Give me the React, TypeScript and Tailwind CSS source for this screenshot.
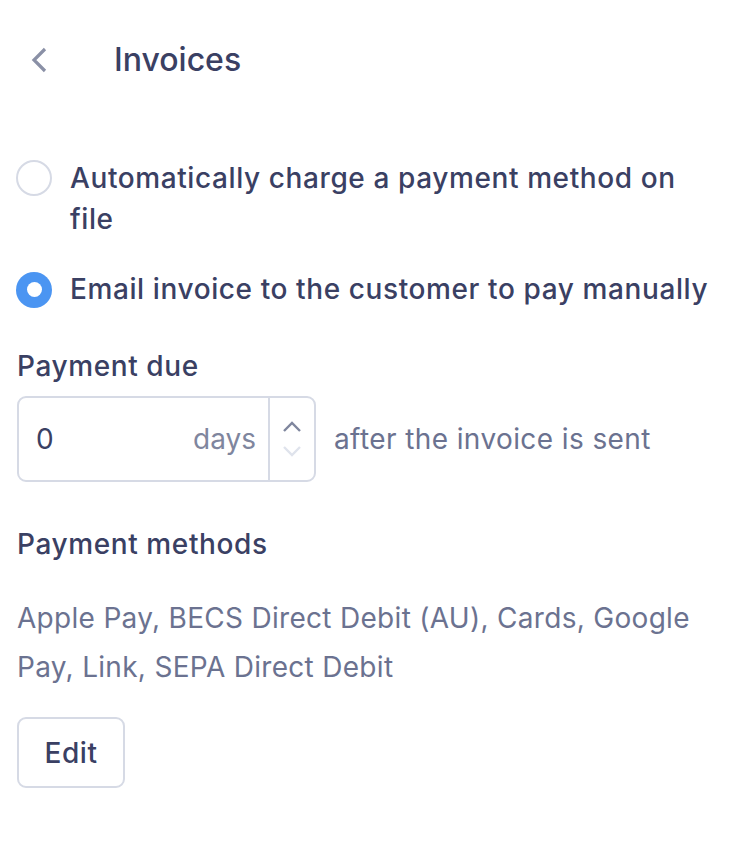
import React from "react";

export default function App() {
  const font = { fontFamily: "Inter, 'Noto Sans', sans-serif" };
  return (
    <div className="w-[740px] h-[842px] bg-white text-[#3c4264]" style={font}>
      <div className="flex items-center h-[60px] mt-[30px] pl-[28px]">
        <svg width="22" height="30" viewBox="0 0 22 30" className="shrink-0">
          <path d="M17 4 L6 15 L17 26" fill="none" stroke="#8a90a6" strokeWidth="3.2" strokeLinecap="butt" strokeLinejoin="miter" />
        </svg>
        <div className="ml-[64px] text-[32px] font-medium leading-[40px] text-[#3a4063]">Invoices</div>
      </div>

      <div className="px-[16px] mt-[68px]">
        <div className="flex items-start gap-[18px]">
          <div className="mt-[2px] w-[36px] h-[36px] shrink-0 rounded-full border-[2px] border-[#d6dae5] bg-white" />
          <div className="text-[28px] font-medium leading-[41px] text-[#3a4063] tracking-[0.6px]">
            Automatically charge a payment method on file
          </div>
        </div>
        <div className="flex items-center gap-[18px] mt-[29px]">
          <div className="w-[36px] h-[36px] shrink-0 rounded-full bg-[#4b95f2] flex items-center justify-center">
            <div className="w-[15px] h-[15px] rounded-full bg-white" />
          </div>
          <div className="text-[28px] font-medium leading-[41px] text-[#3a4063] tracking-[0.6px]">
            Email invoice to the customer to pay manually
          </div>
        </div>

        <div className="mt-[36px] text-[28px] font-medium leading-[40px] text-[#3a4063] pl-[1px] tracking-[0.6px]">Payment due</div>
        <div className="flex items-center mt-[10px]">
          <div className="flex w-[299px] h-[86px] ml-[1px] rounded-[9px] border-[2px] border-[#d6dae5]">
            <div className="flex-1 flex items-center justify-between pl-[17px] pr-[12px]">
              <span className="text-[28px] text-[#3a4063]">0</span>
              <span className="text-[28px] text-[#7f869e]">days</span>
            </div>
            <div className="w-[46px] border-l-[2px] border-[#d6dae5] flex flex-col items-center justify-center gap-[12px]">
              <svg width="20" height="12" viewBox="0 0 20 12">
                <path d="M2 10 L10 2 L18 10" fill="none" stroke="#7f869e" strokeWidth="2.4" />
              </svg>
              <svg width="20" height="12" viewBox="0 0 20 12">
                <path d="M2 2 L10 10 L18 2" fill="none" stroke="#dfe3ec" strokeWidth="2.4" />
              </svg>
            </div>
          </div>
          <div className="ml-[18px] text-[28px] text-[#6b7290] tracking-[0.4px]">after the invoice is sent</div>
        </div>

        <div className="mt-[42px] text-[28px] font-medium leading-[40px] text-[#3a4063] pl-[1px] tracking-[0.6px]">Payment methods</div>
        <div className="mt-[30px] text-[28px] leading-[49px] text-[#6b7290] pl-[1px] w-[700px] tracking-[0.3px]">
          Apple Pay, BECS Direct Debit (AU), Cards, Google Pay, Link, SEPA Direct Debit
        </div>
        <button className="mt-[25px] ml-[1px] w-[108px] h-[71px] rounded-[9px] border-[2px] border-[#d6dae5] bg-white text-[28px] font-medium text-[#3a4063] tracking-[0.6px]">
          Edit
        </button>
      </div>
    </div>
  );
}
